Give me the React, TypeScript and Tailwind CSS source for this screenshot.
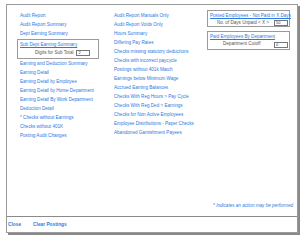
const colOne = [
  'Audit Report',
  'Audit Report Summary',
  'Dept Earning Summary',
];

const colOneRest = [
  'Earning and Deduction Summary',
  'Earning Detail',
  'Earning Detail by Employee',
  'Earning Detail by Home Department',
  'Earning Detail By Work Department',
  'Deduction Detail',
  '* Checks without Earnings',
  'Checks without 401K',
  'Posting Audit Changes',
];

const colTwo = [
  'Audit Report Manuals Only',
  'Audit Report Voids Only',
  'Hours Summary',
  'Differing Pay Rates',
  'Checks missing statutory deductions',
  'Checks with incorrect paycycle',
  'Postings without 401k Match',
  'Earnings below Minimum Wage',
  'Accrued Earning Balances',
  'Checks With Reg Hours > Pay Cycle',
  'Checks With Reg Ded > Earnings',
  'Checks for Non Active Employees',
  'Employee Distributions - Paper Checks',
  'Abandoned Garnishment Payees',
];

function Link({ label, underline }: { label: string; underline?: boolean }) {
  return (
    <a
      href="#"
      className={
        underline
          ? 'block h-[9px] leading-[9px] whitespace-nowrap text-[#2a7ae2] underline'
          : 'block h-[9px] leading-[9px] whitespace-nowrap text-[#2a7ae2]'
      }
    >
      {label}
    </a>
  );
}

function SmallInput({ value }: { value: string }) {
  return (
    <div className="w-[14px] h-[6px] border border-[#777] bg-white text-[4px] leading-[4px] pl-px text-[#333]">
      {value}
    </div>
  );
}

export default function App() {
  return (
    <div className="w-[306px] h-[241px] bg-white pt-[4px] pl-[6px] font-['Liberation_Sans',Arial,sans-serif] text-[4.6px]">
      <div className="w-[292px] h-[229px] border border-[#9a9a9a] shadow-[2px_2px_0_#8a8a8a] flex flex-col">
        {/* Report links */}
        <div className="h-[212px] border-b border-[#8a8a8a] flex flex-col">
          <div className="flex pt-[6px] pl-[13px]">
            <div className="w-[94px]">
              {colOne.map((l) => (
                <Link key={l} label={l} />
              ))}
              <div className="ml-[-3px] w-[82px] h-[20px] border border-[#9a9a9a] pl-[2px] my-[0.5px]">
                <Link label="Sub Dept Earning Summary" underline />
                <div className="flex items-center h-[9px] pl-[15px] gap-[3px]">
                  <span className="text-[#555] whitespace-nowrap">Digits for Sub Total</span>
                  <SmallInput value="2" />
                </div>
              </div>
              {colOneRest.map((l) => (
                <Link key={l} label={l} />
              ))}
            </div>
            <div className="w-[93px]">
              {colTwo.map((l) => (
                <Link key={l} label={l} />
              ))}
            </div>
            <div className="w-[83px] flex flex-col gap-[4px] -mt-[1px]">
              <div className="h-[17px] border border-[#9a9a9a] pl-[2px] pr-[1px]">
                <Link label="Posted Employees - Not Paid in X Days" underline />
                <div className="flex items-center justify-end gap-[5px] h-[6px]">
                  <span className="text-[#555] whitespace-nowrap">No. of Days Unpaid &lt; X &gt;</span>
                  <SmallInput value="50" />
                </div>
              </div>
              <div className="h-[19px] border border-[#9a9a9a] pl-[2px] pr-[1px]">
                <Link label="Paid Employees By Department" underline />
                <div className="flex items-center h-[7px] pl-[13px]">
                  <span className="text-[#555] whitespace-nowrap">Department Cutoff</span>
                  <div className="ml-auto">
                    <SmallInput value="0" />
                  </div>
                </div>
              </div>
            </div>
          </div>
          <div className="mt-auto mb-[6px] pr-[4px] text-right italic text-[#2a7ae2] whitespace-nowrap">
            * Indicates an action may be performed
          </div>
        </div>
        {/* Footer */}
        <div className="flex items-center gap-[12px] pl-[1px] h-[15px] font-bold text-[4.8px]">
          <a href="#" className="text-[#2a7ae2]">Close</a>
          <a href="#" className="text-[#2a7ae2]">Clear Postings</a>
        </div>
      </div>
    </div>
  );
}
